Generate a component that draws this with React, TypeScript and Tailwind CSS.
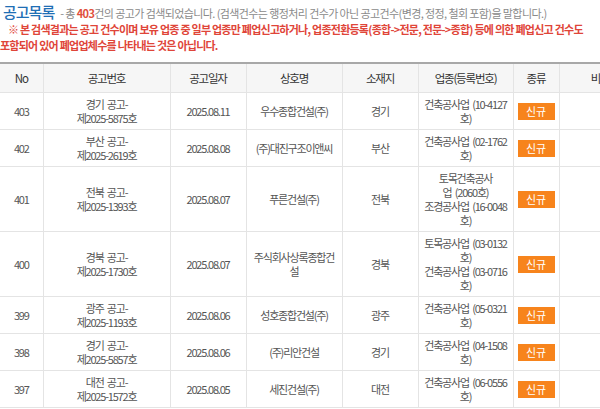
import React from "react";

const rows = [
  {
    no: "403",
    num: ["경기 공고-", "제2025-5875호"],
    date: "2025.08.11",
    name: ["우수종합건설(주)"],
    region: "경기",
    biz: ["건축공사업 (10-4127", "호)"],
  },
  {
    no: "402",
    num: ["부산 공고-", "제2025-2619호"],
    date: "2025.08.08",
    name: ["(주)대진구조이앤씨"],
    region: "부산",
    biz: ["건축공사업 (02-1762", "호)"],
  },
  {
    no: "401",
    num: ["전북 공고-", "제2025-1393호"],
    date: "2025.08.07",
    name: ["푸른건설(주)"],
    region: "전북",
    biz: ["토목건축공사", "업 (2060호)", "조경공사업 (16-0048", "호)"],
  },
  {
    no: "400",
    num: ["경북 공고-", "제2025-1730호"],
    date: "2025.08.07",
    name: ["주식회사상록종합건", "설"],
    region: "경북",
    biz: ["토목공사업 (03-0132", "호)", "건축공사업 (03-0716", "호)"],
  },
  {
    no: "399",
    num: ["광주 공고-", "제2025-1193호"],
    date: "2025.08.06",
    name: ["성호종합건설(주)"],
    region: "광주",
    biz: ["건축공사업 (05-0321", "호)"],
  },
  {
    no: "398",
    num: ["경기 공고-", "제2025-5857호"],
    date: "2025.08.06",
    name: ["(주)리안건설"],
    region: "경기",
    biz: ["건축공사업 (04-1508", "호)"],
  },
  {
    no: "397",
    num: ["대전 공고-", "제2025-1572호"],
    date: "2025.08.05",
    name: ["세진건설(주)"],
    region: "대전",
    biz: ["건축공사업 (06-0556", "호)"],
  },
];

const headers = ["No", "공고번호", "공고일자", "상호명", "소재지", "업종(등록번호)", "종류", "비고"];

function Lines({ lines }: { lines: string[] }) {
  return (
    <>
      {lines.map((l, i) => (
        <div key={i} className="whitespace-nowrap">
          {l}
        </div>
      ))}
    </>
  );
}

export default function App() {
  const cell = "border-b border-r border-[#e4e4e4] px-1 py-[4px] text-center align-middle";
  return (
    <div
      className="w-[600px] h-[409px] overflow-hidden bg-white text-[#555]"
      style={{ fontFamily: '"Noto Sans CJK KR", "Noto Sans", sans-serif' }}
    >
      {/* Title */}
      <div className="pl-[3px] pt-[3px] flex items-baseline gap-[6px] whitespace-nowrap">
        <h2 className="text-[15px] font-medium tracking-[-1px] text-[#1f6fb5] leading-[18px]">공고목록</h2>
        <span className="text-[11px] tracking-[-0.6px] text-[#8a8a8a]">
          - 총 <b className="text-[#e0503c] font-bold">403</b>건의 공고가 검색되었습니다. (검색건수는 행정처리 건수가 아닌
          공고건수(변경, 정정, 철회 포함)을 말합니다.)
        </span>
      </div>
      <div className="text-[11px] font-bold leading-[16px] tracking-[-0.75px] text-[#df4539] whitespace-nowrap -mt-[1px]">
        <div className="pl-[8px]">
          ※ 본 검색결과는 공고 건수이며 보유 업종 중 일부 업종만 폐업신고하거나, 업종전환등록(종합-&gt;전문,
          전문-&gt;종합) 등에 의한 폐업신고 건수도
        </div>
        <div>포함되어 있어 폐업업체수를 나타내는 것은 아닙니다.</div>
      </div>

      {/* Table */}
      <table className="mt-[9px] w-[641px] table-fixed border-collapse border-t-2 border-[#a8a8a8] text-[11px] leading-[14px] tracking-[-1.2px] [word-spacing:2px]">
        <colgroup>
          <col className="w-[43px]" />
          <col className="w-[127px]" />
          <col className="w-[76px]" />
          <col className="w-[96px]" />
          <col className="w-[76px]" />
          <col className="w-[95px]" />
          <col className="w-[46px]" />
          <col className="w-[82px]" />
        </colgroup>
        <thead>
          <tr className="h-[30px] bg-[#f6f6f6] text-[#333]">
            {headers.map((h, i) => (
              <th key={h} className={`${cell} font-normal text-[11.5px] ${i === 7 ? "border-r-0" : ""}`}>
                {h}
              </th>
            ))}
          </tr>
        </thead>
        <tbody>
          {rows.map((r) => (
            <tr key={r.no}>
              <td className={cell}>{r.no}</td>
              <td className={cell}>
                <Lines lines={r.num} />
              </td>
              <td className={cell}>{r.date}</td>
              <td className={cell}>
                <Lines lines={r.name} />
              </td>
              <td className={cell}>{r.region}</td>
              <td className={cell}>
                <Lines lines={r.biz} />
              </td>
              <td className={cell}>
                <span className="inline-block w-[37px] h-[17px] leading-[17px] bg-[#f7841c] text-white text-[11px] tracking-normal">
                  신규
                </span>
              </td>
              <td className={`${cell} border-r-0`}></td>
            </tr>
          ))}
        </tbody>
      </table>
    </div>
  );
}
